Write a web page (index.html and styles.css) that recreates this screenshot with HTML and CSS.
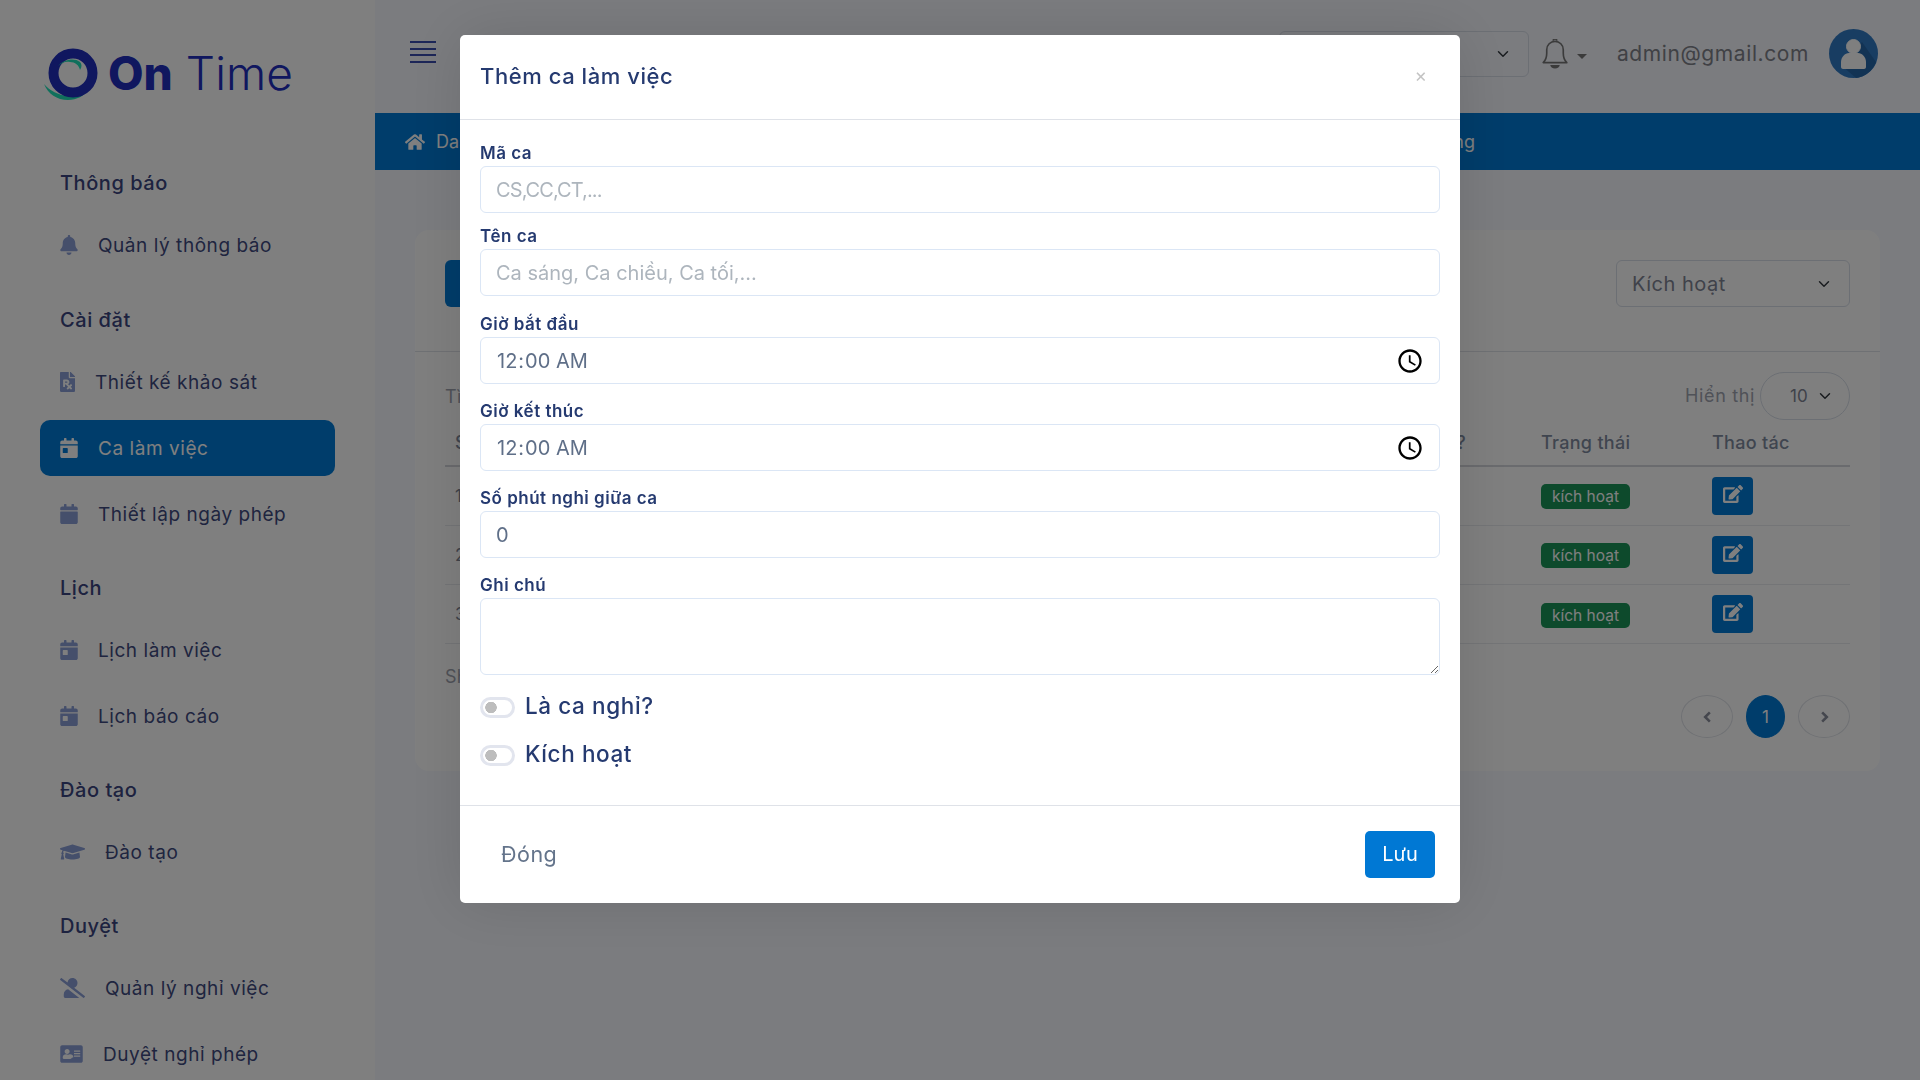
FILE: index.html
```html
<!DOCTYPE html>
<html lang="vi">

<head>
    <meta charset="UTF-8">
    <meta name="viewport" content="width=device-width, initial-scale=1.0">
    <title>Ca làm việc</title>
    <link rel="stylesheet" href="styles.css">
</head>

<body>
    <svg class="icon-defs" xmlns="http://www.w3.org/2000/svg">
        <symbol id="i-bell" viewBox="0 0 448 512"><path d="M224 512c35.32 0 63.97-28.65 63.97-64H160.03c0 35.35 28.65 64 63.97 64zm215.39-149.71c-19.32-20.76-55.47-51.99-55.47-154.29 0-77.7-54.48-139.9-127.94-155.16V32c0-17.67-14.32-32-31.98-32s-31.98 14.33-31.98 32v20.84C118.56 68.1 64.08 130.3 64.08 208c0 102.3-36.15 133.53-55.47 154.29-6 6.45-8.66 14.16-8.61 21.71.11 16.4 12.98 32 32.1 32h383.8c19.12 0 32-15.6 32.1-32 .05-7.55-2.61-15.27-8.61-21.71z"/></symbol>
        <symbol id="i-cal" viewBox="0 0 448 512"><path d="M12 192h424c6.6 0 12 5.4 12 12v260c0 26.5-21.5 48-48 48H48c-26.5 0-48-21.5-48-48V204c0-6.6 5.4-12 12-12zm436-44v-36c0-26.5-21.5-48-48-48h-48V12c0-6.6-5.4-12-12-12h-40c-6.6 0-12 5.4-12 12v52H160V12c0-6.6-5.4-12-12-12h-40c-6.6 0-12 5.4-12 12v52H48C21.5 64 0 85.5 0 112v36c0 6.6 5.4 12 12 12h424c6.6 0 12-5.4 12-12z"/></symbol>
        <symbol id="i-cal-day" viewBox="0 0 448 512"><path d="M0 464c0 26.5 21.5 48 48 48h352c26.5 0 48-21.5 48-48V192H0v272zm64-192c0-8.8 7.2-16 16-16h96c8.8 0 16 7.2 16 16v96c0 8.8-7.2 16-16 16H80c-8.8 0-16-7.2-16-16v-96zM400 64h-48V16c0-8.8-7.2-16-16-16h-32c-8.8 0-16 7.2-16 16v48H160V16c0-8.8-7.2-16-16-16h-32c-8.8 0-16 7.2-16 16v48H48C21.5 64 0 85.5 0 112v48h448v-48c0-26.5-21.5-48-48-48z"/></symbol>
        <symbol id="i-file" viewBox="0 0 384 512"><path d="M224 136V0H24C10.7 0 0 10.7 0 24v464c0 13.3 10.7 24 24 24h336c13.3 0 24-10.7 24-24V160H248c-13.2 0-24-10.8-24-24zm68.53 179.48l11.31 11.31c6.25 6.25 6.25 16.38 0 22.63l-29.9 29.9L304 409.38c6.25 6.25 6.25 16.38 0 22.63l-11.31 11.31c-6.25 6.25-16.38 6.25-22.63 0L240 413.25l-30.06 30.06c-6.25 6.25-16.38 6.25-22.63 0L176 432c-6.25-6.25-6.25-16.38 0-22.63l30.06-30.06L146.74 320H128v48c0 8.84-7.16 16-16 16H96c-8.84 0-16-7.16-16-16V208c0-8.84 7.16-16 16-16h80c35.35 0 64 28.65 64 64 0 24.22-13.62 45.05-33.46 55.92L240 345.38l29.9-29.9c6.25-6.25 16.38-6.25 22.63 0zM176 272h-48v-32h48c8.82 0 16 7.18 16 16s-7.18 16-16 16zm208-150.1v6.1H256V0h6.06c6.37 0 12.47 2.53 16.97 7.03l97.94 97.94c4.5 4.5 7.03 10.59 7.03 16.93z"/></symbol>
        <symbol id="i-cap" viewBox="0 0 640 512"><path d="M622.34 153.2L343.4 67.5c-15.2-4.67-31.6-4.67-46.79 0L17.66 153.2c-23.54 7.23-23.54 38.36 0 45.59l48.63 14.94c-10.67 13.19-17.23 29.28-17.88 46.9C38.78 266.15 32 276.11 32 288c0 10.78 5.68 19.85 13.86 25.65L20.33 428.53C18.11 438.52 25.71 448 35.94 448h56.11c10.24 0 17.84-9.48 15.62-19.47L82.14 313.65C90.32 307.85 96 298.78 96 288c0-11.57-6.47-21.25-15.66-26.87.76-15.02 8.44-28.3 20.69-36.72L296.6 284.5c9.06 2.78 26.44 6.25 46.79 0l278.95-85.7c23.55-7.24 23.55-38.36 0-45.6zM352.79 315.09c-28.53 8.76-52.84 3.92-65.59 0l-145.02-44.55L128 384c0 35.35 85.96 64 192 64s192-28.65 192-64l-14.18-113.47-145.03 44.56z"/></symbol>
        <symbol id="i-user-slash" viewBox="0 0 640 512"><path d="M633.8 458.1L362.3 248.3C412.1 230.7 448 183.8 448 128 448 57.3 390.7 0 320 0c-67.1 0-121.5 51.8-126.9 117.4L45.5 3.4C38.5-2 28.5-.8 23 6.2L3.4 31.4c-5.4 7-4.2 17 2.8 22.4l588.4 454.7c7 5.4 17 4.2 22.5-2.8l19.6-25.3c5.4-6.8 4.1-16.9-2.9-22.3zM96 422.4V464c0 26.5 21.5 48 48 48h350.2L207.4 290.3C144.2 301.3 96 356 96 422.4z"/></symbol>
        <symbol id="i-id" viewBox="0 0 576 512"><path d="M528 32H48C21.5 32 0 53.5 0 80v352c0 26.5 21.5 48 48 48h480c26.5 0 48-21.5 48-48V80c0-26.5-21.5-48-48-48zM176 128c35.3 0 64 28.7 64 64s-28.7 64-64 64-64-28.7-64-64 28.7-64 64-64zm112 232c0 13.3-12.5 24-28 24H92c-15.5 0-28-10.700-28-24v-24c0-39.800 37.600-72 84-72h6c15 6 30 9 46 9s31-3 46-9h6c46.400 0 84 32.200 84 72zm224-40c0 4.400-3.600 8-8 8H360c-4.400 0-8-3.600-8-8v-16c0-4.400 3.600-8 8-8h144c4.400 0 8 3.600 8 8zm0-64c0 4.400-3.600 8-8 8H360c-4.400 0-8-3.600-8-8v-16c0-4.400 3.600-8 8-8h144c4.400 0 8 3.600 8 8zm0-64c0 4.400-3.600 8-8 8H360c-4.400 0-8-3.600-8-8v-16c0-4.400 3.600-8 8-8h144c4.400 0 8 3.600 8 8z"/></symbol>
        <symbol id="i-home" viewBox="0 0 576 512"><path d="M280.37 148.26L96 300.11V464a16 16 0 0 0 16 16l112.06-.29a16 16 0 0 0 15.92-16V368a16 16 0 0 1 16-16h64a16 16 0 0 1 16 16v95.64a16 16 0 0 0 16 16.05L464 480a16 16 0 0 0 16-16V300L295.67 148.26a12.19 12.19 0 0 0-15.3 0zM571.6 251.47L488 182.56V44.05a12 12 0 0 0-12-12h-56a12 12 0 0 0-12 12v72.61L318.47 43a48 48 0 0 0-61 0L4.34 251.47a12 12 0 0 0-1.6 16.9l25.5 31A12 12 0 0 0 45.15 301l235.22-193.74a12.19 12.19 0 0 1 15.3 0L530.9 301a12 12 0 0 0 16.9-1.6l25.5-31a12 12 0 0 0-1.7-16.93z"/></symbol>
        <symbol id="i-edit" viewBox="0 0 576 512"><path d="M402.6 83.2l90.2 90.2c3.8 3.8 3.8 10 0 13.8L274.4 405.6l-92.8 10.3c-12.4 1.4-22.9-9.1-21.5-21.5l10.3-92.8L388.8 83.2c3.8-3.8 10-3.8 13.8 0zm162-22.9l-48.8-48.8c-15.2-15.2-39.9-15.2-55.2 0l-35.4 35.4c-3.8 3.8-3.8 10 0 13.8l90.2 90.2c3.8 3.8 10 3.8 13.8 0l35.4-35.4c15.2-15.3 15.2-40 0-55.2zM384 346.2V448H64V128h229.8c3.2 0 6.2-1.3 8.5-3.5l40-40c7.6-7.6 2.2-20.5-8.5-20.5H48C21.5 64 0 85.5 0 112v352c0 26.5 21.5 48 48 48h352c26.5 0 48-21.5 48-48V306.2c0-10.7-12.9-16-20.5-8.5l-40 40c-2.2 2.3-3.5 5.3-3.500 8.5z"/></symbol>
    </svg>

    <aside class="sidebar">
        <div class="logo">
            <svg class="logo-mark" viewBox="0 0 56 56" xmlns="http://www.w3.org/2000/svg">
                <path class="logo-teal" d="M0 39c4 10 13 16 24 16 9 0 16-4 21-11-6 5-13 8-21 7C14 50 6 46 0 39z"/>
                <circle class="logo-ring" cx="29" cy="28" r="19.500"/>
                <path class="logo-teal" d="M14 21c5-6 16-9 22-4 2 2 2 5 0 8-1-5-5-8-10-8-5-1-8 1-12 4z"/>
            </svg>
            <span class="logo-on">On</span>
            <span class="logo-time">Time</span>
        </div>

        <nav class="nav">
            <div class="nav-group">
                <h4>Thông báo</h4>
                <a class="nav-item"><svg class="ic ic-cal"><use href="#i-bell"/></svg>Quản lý thông báo</a>
            </div>
            <div class="nav-group">
                <h4>Cài đặt</h4>
                <a class="nav-item"><svg class="ic ic-file"><use href="#i-file"/></svg>Thiết kế khảo sát</a>
                <a class="nav-item active"><svg class="ic ic-cal"><use href="#i-cal-day"/></svg>Ca làm việc</a>
                <a class="nav-item"><svg class="ic ic-cal"><use href="#i-cal"/></svg>Thiết lập ngày phép</a>
            </div>
            <div class="nav-group">
                <h4>Lịch</h4>
                <a class="nav-item"><svg class="ic ic-cal"><use href="#i-cal-day"/></svg>Lịch làm việc</a>
                <a class="nav-item"><svg class="ic ic-cal"><use href="#i-cal-day"/></svg>Lịch báo cáo</a>
            </div>
            <div class="nav-group">
                <h4>Đào tạo</h4>
                <a class="nav-item"><svg class="ic ic-wide"><use href="#i-cap"/></svg>Đào tạo</a>
            </div>
            <div class="nav-group">
                <h4>Duyệt</h4>
                <a class="nav-item"><svg class="ic ic-wide"><use href="#i-user-slash"/></svg>Quản lý nghỉ việc</a>
                <a class="nav-item"><svg class="ic ic-id"><use href="#i-id"/></svg>Duyệt nghỉ phép</a>
            </div>
        </nav>
    </aside>

    <main class="main">
        <header class="topbar">
            <div class="burger"><span></span><span></span><span></span><span></span></div>
            <div class="top-right">
                <select class="form-select top-select"><option></option></select>
                <svg class="top-bell" viewBox="4 3 22 25.400" xmlns="http://www.w3.org/2000/svg">
                    <path d="M5 23c2-2 3-4 3-8V12a7 7 0 0 1 14 0v3c0 4 1 6 3 8z" fill="none" stroke="#777" stroke-width="1.400" stroke-linejoin="round"/>
                    <path d="M13.500 4.500a1.500 1.500 0 0 1 3 0" fill="none" stroke="#777" stroke-width="1.400"/>
                    <path d="M11 25h8a4 3 0 0 1-8 0z" fill="#777"/>
                </svg>
                <span class="caret"></span>
                <span class="email">admin@gmail.com</span>
                <svg class="avatar" viewBox="0 0 49 49" xmlns="http://www.w3.org/2000/svg">
                    <circle cx="24.500" cy="24.500" r="24.500" fill="#307ac4"/>
                    <path d="M33 13L47 33A24.500 24.500 0 0 1 27 49L12 36z" fill="#2566a8"/>
                    <circle cx="24.500" cy="17.500" r="7" fill="#fff" stroke="#fff"/>
                    <path d="M12 38V33c0-5 4-9 8-9h9c4 0 8 4 8 9v5c0 1-1 2-2 2H14c-1 0-2-1-2-2z" fill="#fff"/>
                </svg>
            </div>
        </header>

        <div class="crumb-bar">
            <svg class="crumb-home"><use href="#i-home"/></svg>
            <span>Dashboard</span>
            <span class="crumb-end">Thiết lập chung</span>
        </div>

        <section class="card">
            <div class="card-head">
                <button class="btn-add">Thêm mới</button>
                <select class="form-select status-select"><option>Kích hoạt</option></select>
            </div>
            <div class="card-body">
                <div class="tools">
                    <span class="muted">Tìm kiếm</span>
                    <div class="page-size">
                        <span class="muted size-label">Hiển thị</span>
                        <select class="form-select size-select"><option>10</option></select>
                    </div>
                </div>
                <table class="shift-table">
                    <colgroup>
                        <col class="c-stt"><col class="c-code"><col class="c-name"><col class="c-start"><col class="c-end"><col class="c-off"><col class="c-status"><col class="c-act">
                    </colgroup>
                    <thead>
                        <tr><th>STT</th><th>Mã ca</th><th>Tên ca</th><th>Giờ bắt đầu</th><th>Giờ kết thúc</th><th>Là ca nghỉ?</th><th>Trạng thái</th><th>Thao tác</th></tr>
                    </thead>
                    <tbody>
                        <tr><td>1</td><td>CS</td><td>Ca sáng</td><td>08:00</td><td>12:00</td><td>Không</td><td><span class="badge">kích hoạt</span></td><td><button class="btn-edit"><svg><use href="#i-edit"/></svg></button></td></tr>
                        <tr><td>2</td><td>CC</td><td>Ca chiều</td><td>13:00</td><td>17:00</td><td>Không</td><td><span class="badge">kích hoạt</span></td><td><button class="btn-edit"><svg><use href="#i-edit"/></svg></button></td></tr>
                        <tr><td>3</td><td>CT</td><td>Ca tối</td><td>18:00</td><td>22:00</td><td>Không</td><td><span class="badge">kích hoạt</span></td><td><button class="btn-edit"><svg><use href="#i-edit"/></svg></button></td></tr>
                    </tbody>
                </table>
                <div class="table-foot">
                    <span class="muted showing">Showing 1 to 3 of 3</span>
                    <div class="pager">
                        <button class="page-btn"><svg viewBox="0 0 10 12"><path d="M7 2L3 6l4 4" fill="none" stroke="#8a8e9c" stroke-width="2.200"/></svg></button>
                        <button class="page-btn current">1</button>
                        <button class="page-btn"><svg viewBox="0 0 10 12"><path d="M3 2l4 4-4 4" fill="none" stroke="#8a8e9c" stroke-width="2.200"/></svg></button>
                    </div>
                </div>
            </div>
        </section>
    </main>

    <div class="backdrop">
        <div class="modal">
            <div class="modal-header">
                <h5>Thêm ca làm việc</h5>
                <span class="modal-close">×</span>
            </div>
            <form class="modal-body">
                <label class="field-label">Mã ca</label>
                <input class="form-control gap-sm code-input" type="text" placeholder="CS,CC,CT,...">
                <label class="field-label">Tên ca</label>
                <input class="form-control gap-md" type="text" placeholder="Ca sáng, Ca chiều, Ca tối,...">
                <label class="field-label">Giờ bắt đầu</label>
                <input class="form-control" type="time" value="00:00">
                <label class="field-label">Giờ kết thúc</label>
                <input class="form-control" type="time" value="00:00">
                <label class="field-label">Số phút nghỉ giữa ca</label>
                <input class="form-control" type="number" value="0">
                <label class="field-label">Ghi chú</label>
                <textarea class="form-control note"></textarea>
                <label class="switch"><input type="checkbox"><span>Là ca nghỉ?</span></label>
                <label class="switch"><input type="checkbox"><span>Kích hoạt</span></label>
            </form>
            <div class="modal-footer">
                <button class="btn-close-text">Đóng</button>
                <button class="btn-save">Lưu</button>
            </div>
        </div>
    </div>
</body>

</html>
```

FILE: styles.css
```css
* {
    box-sizing: border-box;
}

body {
    margin: 0;
    height: 100vh;
    display: flex;
    overflow: hidden;
    font-family: Inter, "Noto Sans", sans-serif;
    background: #f6f8ff;
    color: #3e4a80;
}

button,
input,
select,
textarea {
    font-family: inherit;
}

.icon-defs {
    display: none;
}

/* sidebar */
.sidebar {
    width: 375px;
    flex: none;
    padding: 45px 40px 0;
    background: #fff;
    overflow: hidden;
}

.logo {
    display: flex;
    align-items: center;
    height: 56px;
    margin-bottom: 67px;
    margin-left: 4px;
    color: #202ebe;
    font-size: 46px;
    line-height: 56px;
}

.logo-mark {
    width: 56px;
    height: 56px;
    flex: none;
    margin-right: 8px;
}

.logo-ring {
    fill: none;
    stroke: #202ebe;
    stroke-width: 10;
}

.logo-teal {
    fill: #20e0b8;
}

.logo-on {
    font-weight: 800;
    margin-right: 13px;
}

.logo-time {
    font-weight: 300;
    letter-spacing: 0.1px;
}

.nav-group {
    margin-bottom: 31px;
}

.nav-group:first-child {
    margin-bottom: 32px;
}

.nav-group h4 {
    margin: 0 0 19px 20px;
    font-size: 20px;
    line-height: 30px;
    font-weight: 500;
    letter-spacing: 0.55px;
    color: #3a4580;
}

.nav-item {
    display: flex;
    align-items: center;
    gap: 20px;
    height: 56px;
    margin-bottom: 10px;
    padding-left: 20px;
    border-radius: 10px;
    font-size: 19px;
    letter-spacing: 0.55px;
    color: #3e4a80;
}

.nav-group .nav-item:last-child {
    margin-bottom: 0;
}

.nav-item.active {
    background: #007ad6;
    color: #fff;
}

.ic {
    flex: none;
    height: 20px;
    fill: #8a9ed6;
}

.ic-cal {
    width: 18px;
}

.ic-file {
    width: 15px;
}

.ic-wide {
    width: 25px;
}

.ic-id {
    width: 23px;
}

.active .ic {
    fill: #fff;
}

/* main area */
.main {
    flex: 1;
    min-width: 0;
}

.topbar {
    height: 113px;
    display: flex;
    align-items: flex-start;
    justify-content: space-between;
    padding: 29px 42px 0 35px;
}

.burger {
    width: 26px;
    margin-top: 12px;
    display: flex;
    flex-direction: column;
    gap: 4.500px;
}

.burger span {
    height: 2px;
    background: #3a4db0;
}

.top-right {
    display: flex;
    align-items: center;
    height: 49px;
}

.form-select {
    appearance: none;
    border: 1px solid #d8dee8;
    border-radius: 6px;
    background-color: transparent;
    background-image: url("data:image/svg+xml,%3csvg xmlns='http://www.w3.org/2000/svg' viewBox='0 0 16 16'%3e%3cpath fill='none' stroke='%23343a40' stroke-linecap='round' stroke-linejoin='round' stroke-width='2' d='M2 5l6 6 6-6'/%3e%3c/svg%3e");
    background-repeat: no-repeat;
    background-size: 16px 12px;
    color: #808494;
}

.top-select {
    width: 250px;
    height: 46px;
    background-position: right 17px center;
}

.top-bell {
    width: 26px;
    height: 30px;
    margin-left: 13px;
}

.caret {
    width: 0;
    height: 0;
    margin-left: 9px;
    border-left: 5px solid transparent;
    border-right: 5px solid transparent;
    border-top: 5px solid #777;
    position: relative;
    top: 3px;
}

.email {
    margin-left: 30px;
    font-size: 21px;
    letter-spacing: 0.6px;
    color: #80828a;
}

.avatar {
    width: 49px;
    height: 49px;
    margin-left: 20px;
}

.crumb-bar {
    height: 57px;
    display: flex;
    align-items: center;
    padding-left: 30px;
    background: #007ad6;
    color: #fff;
    font-size: 18px;
}

.crumb-home {
    width: 20px;
    height: 18px;
    margin-right: 11px;
    fill: #fff;
}

.crumb-end {
    margin-left: auto;
    margin-right: 445px;
}

.card {
    margin: 60px 40px 0;
    height: 541px;
    border-radius: 14px;
    background: #fff;
}

.card-head {
    height: 122px;
    padding: 30px 30px 0;
    display: flex;
    justify-content: space-between;
    align-items: flex-start;
    border-bottom: 1px solid #dfe2e8;
}

.btn-add {
    width: 160px;
    height: 47px;
    border: 0;
    border-radius: 6px;
    background: #007ad6;
    color: #fff;
    font-size: 18px;
}

.status-select {
    width: 234px;
    height: 47px;
    padding-left: 15px;
    font-size: 20px;
    letter-spacing: 0.5px;
    background-position: right 17px center;
}

.card-body {
    padding: 20px 30px 0;
}

.tools {
    height: 48px;
    display: flex;
    justify-content: space-between;
    align-items: center;
}

.muted {
    color: #a0a4b0;
    font-size: 18px;
    letter-spacing: 0.3px;
}

.page-size {
    display: flex;
    align-items: center;
    gap: 5px;
}

.size-label {
    margin-bottom: 2px;
    letter-spacing: 0.65px;
}

.size-select {
    width: 90px;
    height: 48px;
    padding-left: 29px;
    border-radius: 25px;
    font-size: 17px;
    background-position: right 16px center;
}

.shift-table {
    width: 1405px;
    table-layout: fixed;
    border-collapse: collapse;
}

.c-stt { width: 100px; }
.c-code { width: 180px; }
.c-name { width: 220px; }
.c-start { width: 210px; }
.c-end { width: 200px; }
.c-off { width: 176px; }
.c-status { width: 171px; }
.c-act { width: 148px; }

.shift-table th {
    height: 46px;
    padding: 0 10px;
    text-align: left;
    font-size: 18px;
    font-weight: 500;
    letter-spacing: 0.3px;
    color: #7f8a9e;
    border-bottom: 2px solid #d4d6dc;
}

.shift-table td {
    height: 59.300px;
    padding: 0 10px;
    font-size: 17px;
    color: #808494;
    border-bottom: 1px solid #e8eaee;
}

.badge {
    display: inline-block;
    width: 89px;
    height: 25px;
    margin-top: 2px;
    border-radius: 5px;
    background: #1b9459;
    color: #fff;
    font-size: 15.500px;
    line-height: 25px;
    text-align: center;
}

.btn-edit {
    display: block;
    width: 41px;
    height: 38px;
    padding: 0;
    border: 0;
    border-radius: 4px;
    background: #007ad6;
}

.btn-edit svg {
    display: block;
    width: 20px;
    height: 18px;
    margin: 0 auto 4px;
    fill: #fff;
}

.table-foot {
    display: flex;
    justify-content: space-between;
    align-items: flex-start;
    height: 100px;
}

.showing {
    margin-top: 22px;
}

.pager {
    display: flex;
    gap: 13px;
    margin-top: 51px;
}

.page-btn {
    width: 52px;
    height: 43px;
    padding: 0;
    border: 1px solid #dfe2e8;
    border-radius: 50%;
    background: none;
}

.page-btn svg {
    width: 13px;
    height: 14px;
    display: block;
    margin: 0 auto;
}

.page-btn.current {
    width: 39px;
    border-color: #007ad6;
    background: #007ad6;
    color: #fff;
    font-size: 17px;
    font-family: Inter, sans-serif;
}

/* modal */
.backdrop {
    position: fixed;
    inset: 0;
    background: rgba(0, 0, 0, 0.5);
}

.modal {
    width: 1000px;
    height: 868px;
    margin: 35px auto 0;
    border-radius: 5px;
    background: #fff;
    box-shadow: 0 0 60px rgba(0, 0, 0, 0.12);
}

.modal-header {
    height: 85px;
    display: flex;
    justify-content: space-between;
    align-items: center;
    padding: 0 33px 3px 20px;
    border-bottom: 1px solid #dfe2e8;
}

.modal-header h5 {
    margin: 0;
    font-size: 22px;
    font-weight: 500;
    letter-spacing: 0.55px;
    color: #253a70;
}

.modal-close {
    font-size: 19px;
    color: #c4c4c4;
}

.modal-body {
    height: 685px;
    padding: 22px 20px 0;
}

.field-label {
    display: block;
    height: 24px;
    font-size: 17px;
    font-weight: 600;
    line-height: 22px;
    letter-spacing: 0.5px;
    color: #253a70;
}

.form-control {
    display: block;
    width: 100%;
    height: 47px;
    margin-bottom: 16px;
    padding: 0 15px;
    border: 1px solid #dbe6f5;
    border-radius: 6px;
    background: #fff;
    font-size: 20px;
    color: #5f6f88;
    outline: none;
}

.form-control::placeholder {
    color: #adb5bd;
}

.code-input::placeholder {
    letter-spacing: -0.9px;
}

.form-control[type="number"] {
    appearance: textfield;
}

.form-control::-webkit-calendar-picker-indicator {
    width: 28px;
    height: 28px;
    padding: 0;
    margin: 0;
    background-size: contain;
}

.form-control.gap-sm {
    margin-bottom: 12px;
}

.form-control.gap-md {
    margin-bottom: 17px;
}

.form-control.note {
    height: 77px;
    margin-bottom: 22px;
}

.switch {
    display: flex;
    align-items: center;
    gap: 10px;
    height: 21px;
    margin-bottom: 27px;
    font-size: 22.500px;
    font-weight: 500;
    letter-spacing: 0.6px;
    color: #253a70;
}

.switch span {
    margin-bottom: 4px;
}

.switch input {
    appearance: none;
    width: 35px;
    height: 21px;
    margin: 0;
    border: 3px solid #e2e5ee;
    border-radius: 11px;
    background: radial-gradient(circle at 8px 7.500px, #bdbdbd 5.500px, transparent 6px);
}

.modal-footer {
    height: 98px;
    display: flex;
    justify-content: space-between;
    align-items: flex-start;
    padding: 25px 25px 0 41px;
    border-top: 1px solid #dfe2e8;
}

.btn-close-text {
    height: 47px;
    padding: 0 0 2px;
    border: 0;
    background: none;
    font-size: 21.500px;
    letter-spacing: 0.5px;
    color: #64748b;
}

.btn-save {
    width: 70px;
    height: 47px;
    padding: 0 0 2px;
    border: 0;
    border-radius: 5px;
    background: #0078d4;
    color: #fff;
    font-size: 20px;
}
```
